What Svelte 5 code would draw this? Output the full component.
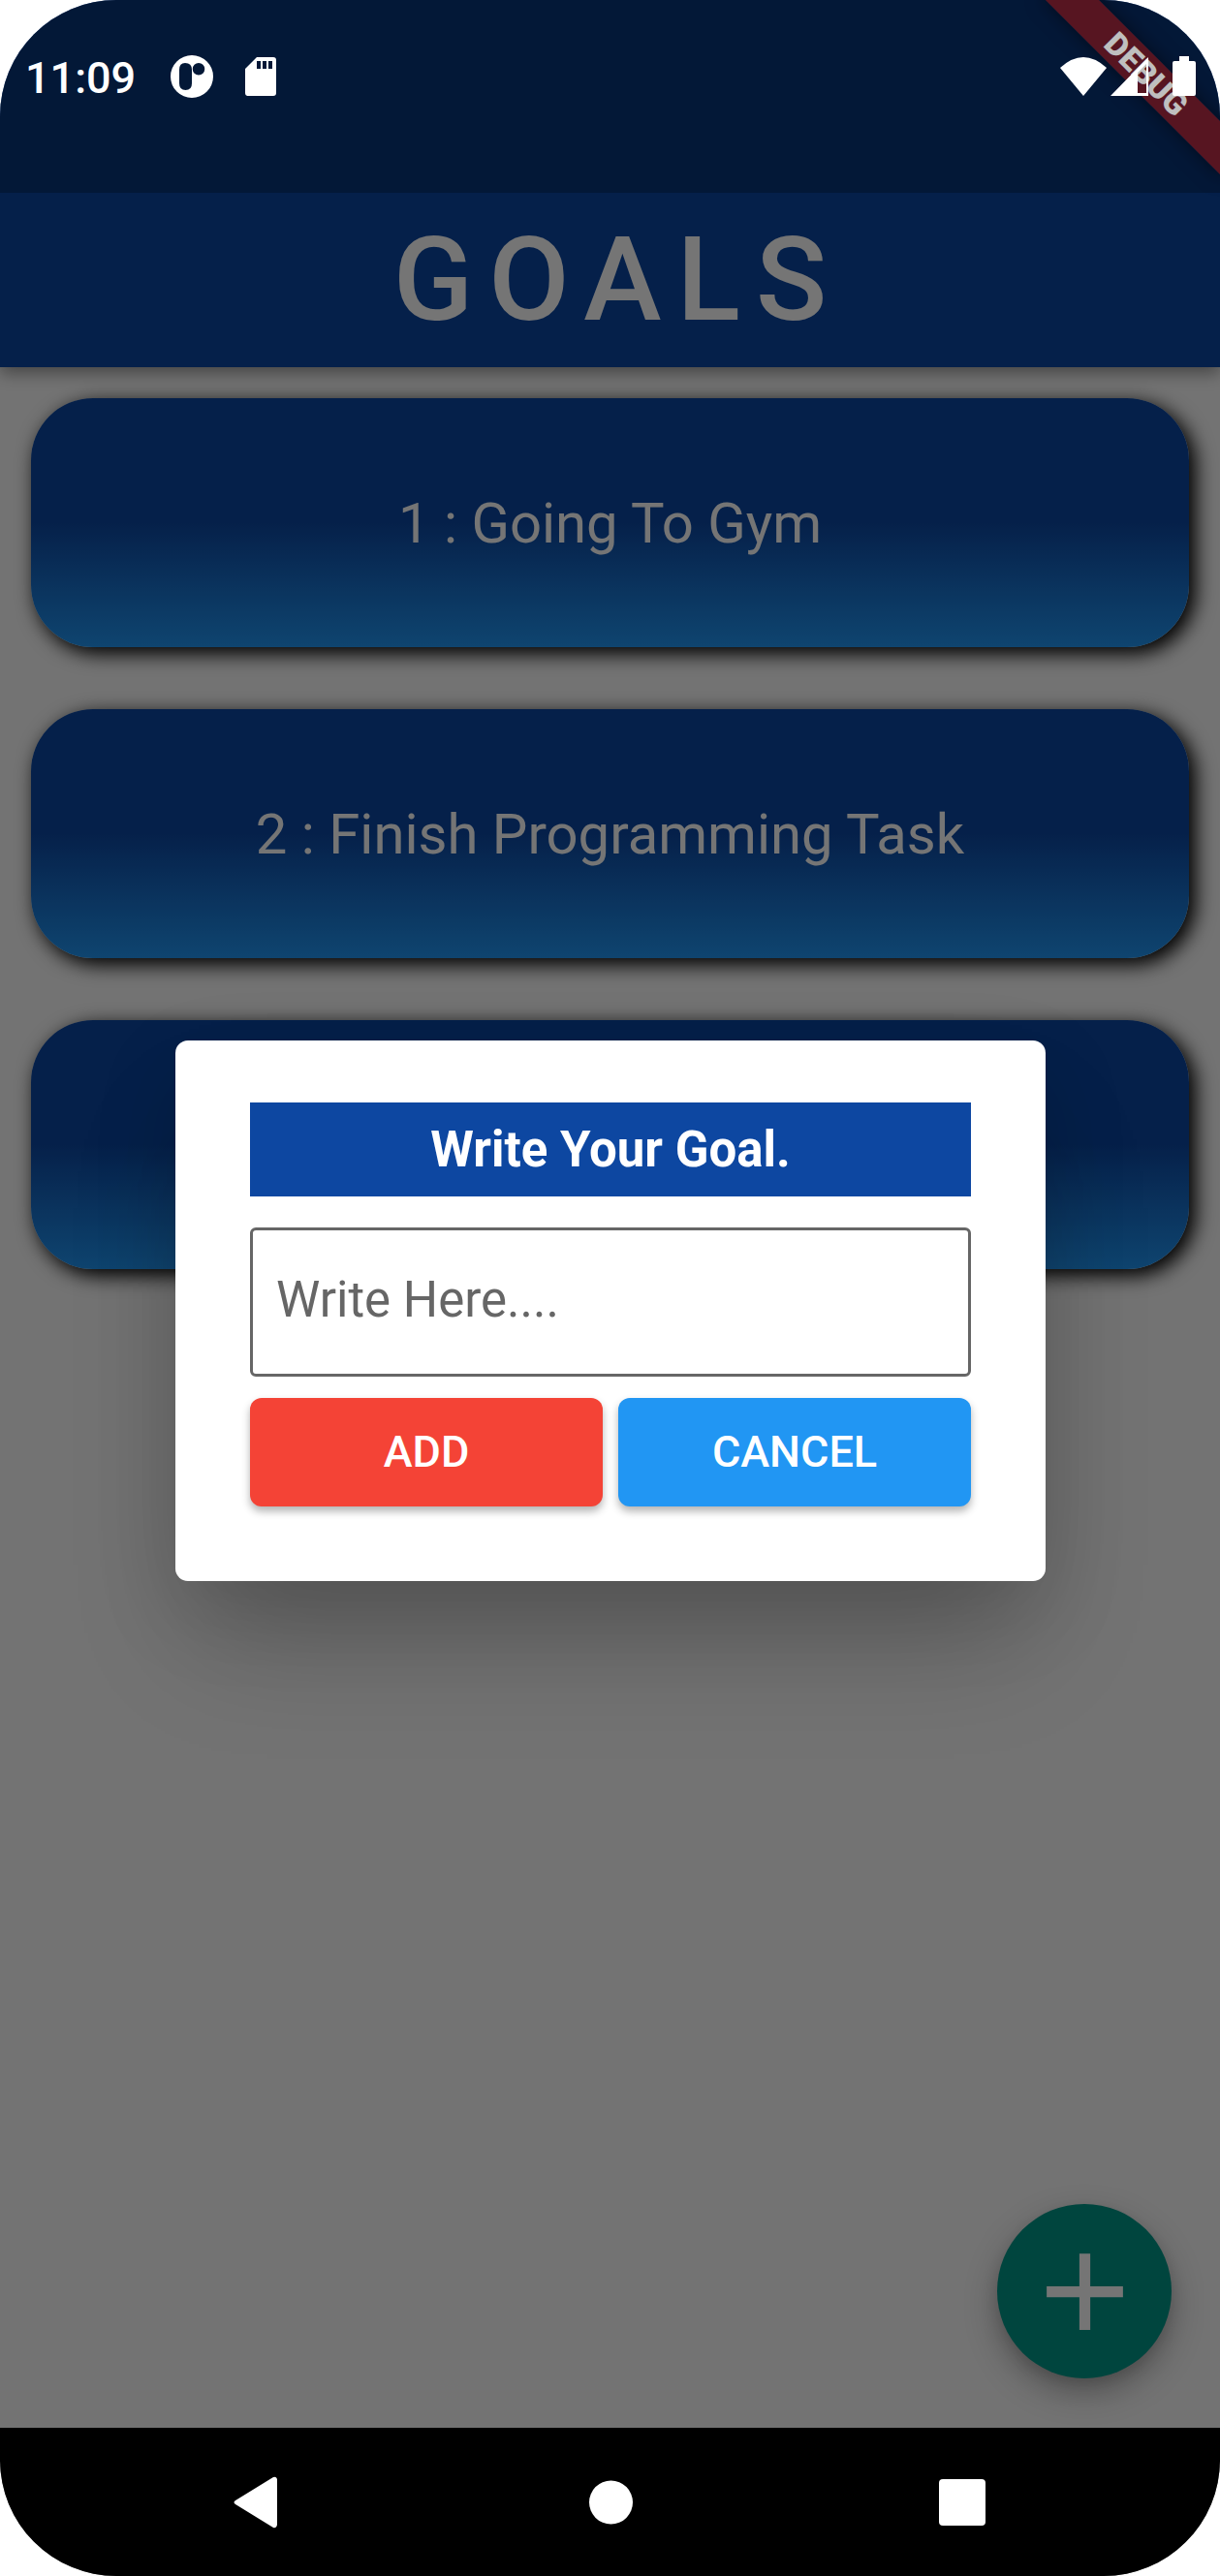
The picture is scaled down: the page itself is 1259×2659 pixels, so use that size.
<script>
  let open = $state(true);
  let draft = $state('');
  let goals = $state(['Going To Gym', 'Finish Programming Task', '']);

  function add() {
    if (draft.trim()) goals.push(draft.trim());
    draft = '';
    open = false;
  }
</script>

<div class="device">
  <header class="app-bar">
    <h1>GOALS</h1>
  </header>

  <main>
    <ul class="goals">
      {#each goals as goal, i}
        <li>{goal ? `${i + 1} : ${goal}` : ''}</li>
      {/each}
    </ul>
    <button class="fab" aria-label="Add goal" onclick={() => (open = true)}>
      <svg viewBox="0 0 24 24" aria-hidden="true"><path d="M19 13h-6v6h-2v-6H5v-2h6V5h2v6h6z" /></svg>
    </button>
  </main>

  <nav class="system-nav">
    <button aria-label="Back">
      <svg viewBox="0 0 54 54" aria-hidden="true"><path d="M47 3v47q-1 4-4 3L4 29q-3-2 0-4L43 1q3-1 4 2z" /></svg>
    </button>
    <button aria-label="Home">
      <svg viewBox="0 0 54 54" aria-hidden="true"><circle cx="27.500" cy="27" r="22.500" /></svg>
    </button>
    <button aria-label="Recent apps">
      <svg viewBox="0 0 54 54" aria-hidden="true"><rect x="2" y="3" width="48" height="48" rx="4" /></svg>
    </button>
  </nav>

  {#if open}
    <div class="scrim">
      <div class="dialog" role="dialog" aria-modal="true" aria-labelledby="dialog-title">
        <h2 id="dialog-title">Write Your Goal.</h2>
        <input type="text" aria-label="Goal" placeholder="Write Here...." bind:value={draft} />
        <div class="actions">
          <button class="add" onclick={add}>ADD</button>
          <button class="cancel" onclick={() => (open = false)}>CANCEL</button>
        </div>
      </div>
    </div>
  {/if}

  <div class="banner">DEBUG</div>

  <div class="status-bar">
    <div class="status-row">
      <time>11:09</time>
      <svg class="app-icon" viewBox="0 0 44 44" aria-hidden="true">
        <path fill-rule="evenodd" d="M22 0a22 22 0 1 1 0 44a22 22 0 1 1 0-44zM15 8q-6 0-6 7v14q0 7 6.500 7t6.500-7V15q0-7-7-7zM29 8a6 6 0 1 0 0 12.500a6 6 0 1 0 0-12.500z" />
      </svg>
      <svg class="sd-icon" viewBox="0 0 34 42" aria-hidden="true">
        <path fill-rule="evenodd" d="M13 1h17q3 0 3 3v34q0 3-3 3H4q-3 0-3-3V13zM13 5v8h4V5zM19 5v8h4V5zM25 5v8h4V5z" />
      </svg>
      <span class="spacer"></span>
      <svg class="wifi-icon" viewBox="0 0 48 40" aria-hidden="true"><path d="M0 11Q24-11 48 11L24 40z" /></svg>
      <svg class="signal-icon" viewBox="0 0 40 40" aria-hidden="true">
        <path fill-rule="evenodd" d="M39 0v40H0zM28 16v21h9V7z" />
      </svg>
      <svg class="battery-icon" viewBox="0 0 24 42" aria-hidden="true">
        <path d="M7 0h10v5h5q2 0 2 2v32q0 2-2 2H2q-2 0-2-2V7q0-2 2-2h5z" />
      </svg>
    </div>
  </div>
</div>

<style>
  :global(body) {
    margin: 0;
    background: #fff;
  }

  .device {
    position: relative;
    display: flex;
    flex-direction: column;
    min-height: 100vh;
    overflow: hidden;
    border-radius: 120px;
    background: #fafafa;
    font-family: Roboto, sans-serif;
  }

  .device * {
    box-sizing: border-box;
  }

  button {
    border: 0;
    padding: 0;
    font-family: inherit;
    cursor: pointer;
  }

  svg {
    display: block;
    fill: #fff;
  }

  .app-bar {
    padding-top: 199px;
    background: #0d47a1;
    box-shadow: 0 6px 16px rgba(0, 0, 0, 0.4);
    z-index: 1;
  }

  h1 {
    margin: 0;
    padding-left: 16px;
    font-size: 121px;
    font-weight: 500;
    line-height: 180px;
    letter-spacing: 16px;
    text-align: center;
    color: #fff;
  }

  main {
    flex: 1;
    display: flex;
    flex-direction: column;
    justify-content: space-between;
    padding: 32px 32px 51px;
  }

  .goals {
    display: grid;
    gap: 64px;
    margin: 0;
    padding: 0;
    list-style: none;
  }

  .goals li {
    display: grid;
    place-items: center;
    height: 257px;
    border-radius: 64px;
    background: linear-gradient(#0d47a1 50%, #2196f3);
    box-shadow: 6px 6px 20px 1px #000;
    font-size: 58px;
    color: #fff;
  }

  .fab {
    display: grid;
    place-items: center;
    align-self: flex-end;
    width: 180px;
    height: 180px;
    margin-right: 18px;
    border-radius: 50%;
    background: #009688;
    box-shadow: 0 14px 34px rgba(0, 0, 0, 0.3), 0 6px 14px rgba(0, 0, 0, 0.1);
  }

  .fab svg {
    width: 135px;
    height: 135px;
  }

  .system-nav {
    position: relative;
    z-index: 3;
    display: flex;
    justify-content: center;
    gap: 310px;
    align-items: center;
    height: 153px;
    background: #000;
  }

  .system-nav button {
    background: none;
  }

  .system-nav svg {
    width: 54px;
    height: 54px;
  }

  .scrim {
    position: absolute;
    inset: 0;
    z-index: 2;
    display: grid;
    place-items: center;
    padding: 199px 180px 153px 181px;
    background: rgba(0, 0, 0, 0.54);
  }

  .dialog {
    display: flex;
    flex-direction: column;
    width: 100%;
    padding: 64px 77px 77px;
    border-radius: 13px;
    background: #fff;
    box-shadow: 0 78px 120px -24px rgba(0, 0, 0, 0.22), 0 30px 90px rgba(0, 0, 0, 0.12);
  }

  h2 {
    margin: 0 0 32px;
    background: #0d47a1;
    font-size: 51px;
    font-weight: 700;
    line-height: 97px;
    text-align: center;
    color: #fff;
  }

  input {
    width: 100%;
    height: 154px;
    margin-bottom: 22px;
    padding: 0 24px 4px;
    border: 3px solid #666;
    border-radius: 6px;
    background: #fff;
    font-family: inherit;
    font-size: 51px;
    color: #222;
  }

  input::placeholder {
    color: #666;
    opacity: 1;
  }

  .actions {
    display: grid;
    grid-template-columns: 1fr 1fr;
    gap: 16px;
  }

  .actions button {
    height: 112px;
    border-radius: 12px;
    box-shadow: 0 5px 8px rgba(0, 0, 0, 0.3);
    font-size: 45px;
    font-weight: 500;
    color: #fff;
  }

  .actions .add {
    background: #f44336;
  }

  .actions .cancel {
    background: #2196f3;
  }

  .banner {
    position: absolute;
    top: 57px;
    right: -54px;
    z-index: 4;
    width: 260px;
    transform: rotate(45deg);
    background: rgba(183, 28, 28, 0.63);
    box-shadow: 0 0 20px rgba(0, 0, 0, 0.5);
    font-size: 33px;
    font-weight: 900;
    line-height: 39px;
    text-align: center;
    color: #fff;
  }

  .status-bar {
    position: absolute;
    inset: 0 0 auto;
    z-index: 5;
    height: 199px;
    background: rgba(0, 0, 0, 0.25);
  }

  .status-row {
    display: flex;
    align-items: center;
    height: 157px;
    padding: 0 25px 0 26px;
  }

  time {
    padding-top: 4px;
    font-size: 45px;
    font-weight: 500;
    color: #fff;
  }

  .app-icon {
    width: 44px;
    height: 44px;
    margin-left: 36px;
  }

  .sd-icon {
    width: 34px;
    height: 42px;
    margin-left: 32px;
  }

  .spacer {
    flex: 1;
  }

  .wifi-icon {
    width: 48px;
    height: 40px;
    margin-right: 4px;
  }

  .signal-icon {
    width: 40px;
    height: 40px;
    margin-right: 24px;
  }

  .battery-icon {
    width: 24px;
    height: 42px;
  }
</style>
